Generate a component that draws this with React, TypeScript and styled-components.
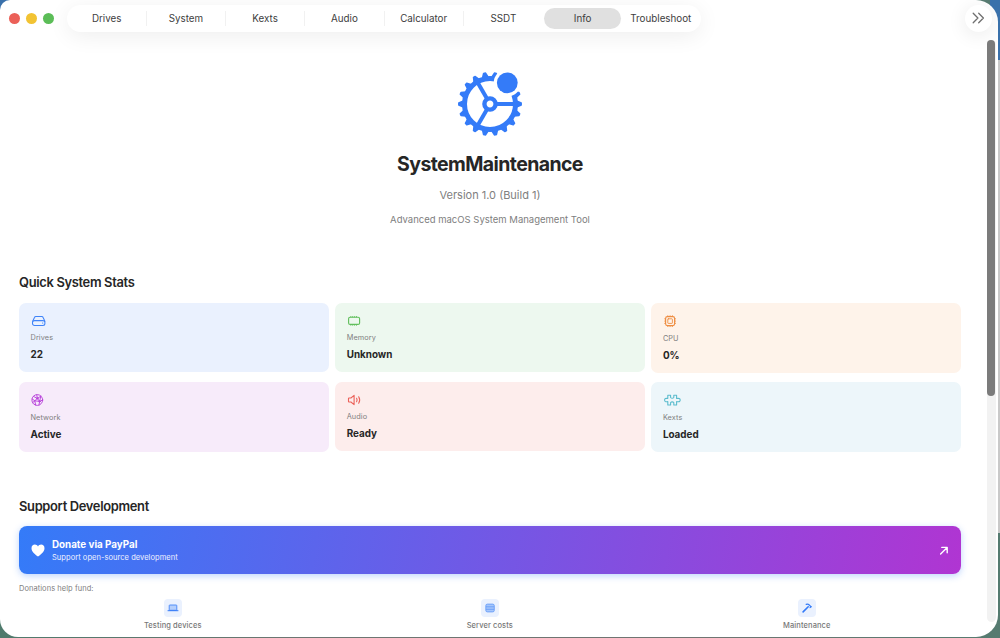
import React from "react";
import styled, { createGlobalStyle } from "styled-components";

const GlobalStyle = createGlobalStyle`
  * { box-sizing: border-box; }
  body { margin: 0; overflow: hidden; font-family: Inter, "Liberation Sans", sans-serif; color: #262626; }
`;

const Desktop = styled.div`
  width: 1000px;
  height: 638px;
  overflow: hidden;
  background:
    linear-gradient(90deg, transparent 990px, #3a71ab 990px) 0 0 / 1000px 60px no-repeat,
    linear-gradient(90deg, transparent 990px, #c9c9c9 990px) 0 60px / 1000px 473px no-repeat,
    linear-gradient(90deg, #3a71ab, #3a71ab) 0 0 / 30px 30px no-repeat,
    linear-gradient(90deg, #4e7a6c, #6d7672 30%, #707572 70%, #557b70);
`;

const Window = styled.div`
  position: relative;
  display: flex;
  flex-direction: column;
  width: 997.5px;
  height: 637px;
  padding-left: 19px;
  background: #fff;
  border-radius: 10px 22px 22px 18px;
  overflow: hidden;
`;

const Toolbar = styled.header`
  display: flex;
  align-items: center;
  flex: none;
  height: 36px;
  margin-left: -19px;
  padding: 0 6px 0 8.5px;
`;

const Lights = styled.div`
  display: flex;
  gap: 6.3px;
  width: 58px;
`;

const Light = styled.i<{ $color: string }>`
  width: 11px;
  height: 11px;
  border-radius: 50%;
  background: ${(p) => p.$color};
`;

const TabBar = styled.nav`
  display: flex;
  align-items: center;
  width: 634.5px;
  height: 27px;
  padding: 0 2px 0 1px;
  border-radius: 14px;
  background: #fff;
  box-shadow: 0 4px 22px rgba(0, 0, 0, 0.07);
`;

const Tab = styled.div<{ $active?: boolean; $divider?: boolean }>`
  display: flex;
  align-items: center;
  justify-content: center;
  flex: none;
  width: ${(p) => (p.$active ? "77px" : "79.25px")};
  height: ${(p) => (p.$active ? "21px" : "15px")};
  margin: ${(p) => (p.$active ? "0 0 0 1.2px" : "0")};
  border-radius: ${(p) => (p.$active ? "11px" : "0")};
  background: ${(p) => (p.$active ? "#e0e0e0" : "transparent")};
  border-right: ${(p) => (p.$divider ? "1px solid #f1f1f1" : "0")};
  font-size: 9.8px;
  color: #3d3d3d;
`;

const MoreButton = styled.div`
  display: grid;
  place-items: center;
  width: 27px;
  height: 27px;
  margin-left: auto;
  border-radius: 50%;
  background: #fff;
  box-shadow: 0 3px 20px rgba(0, 0, 0, 0.09);
`;

const Content = styled.main`
  display: flex;
  flex-direction: column;
  width: 942px;
`;

const Hero = styled.section`
  display: flex;
  flex-direction: column;
  align-items: center;
  height: 236.8px;
  padding-top: 34px;
`;

const AppName = styled.h1`
  margin: 12px 0 0;
  font-size: 19.5px;
  line-height: 28px;
  font-weight: 700;
  letter-spacing: -0.6px;
`;

const Version = styled.div`
  margin-top: 9px;
  font-size: 11px;
  line-height: 16px;
  color: #808080;
`;

const Tagline = styled.div`
  margin-top: 10px;
  font-size: 9.5px;
  line-height: 14px;
  color: #808080;
`;

const SectionTitle = styled.h2`
  margin: 0;
  font-size: 12.9px;
  line-height: 20px;
  font-weight: 600;
  letter-spacing: -0.32px;
`;

const Stats = styled.section`
  display: grid;
  grid-template-columns: repeat(3, 309.6px);
  grid-template-rows: 70px 70px;
  column-gap: 6.6px;
  row-gap: 9.3px;
  align-items: center;
  margin: 9.8px 0 45.2px;
`;

const StatCard = styled.article<{ $tint: string; $height: number }>`
  height: ${(p) => p.$height}px;
  padding: 11px 11.5px;
  border-radius: 7px;
  background: ${(p) => p.$tint};
`;

const StatIcon = styled.div<{ $color: string; $tall: boolean }>`
  display: flex;
  align-items: center;
  height: 14px;
  margin-bottom: ${(p) => (p.$tall ? "5px" : "4.1px")};
  color: ${(p) => p.$color};
`;

const StatLabel = styled.div`
  font-size: 7.3px;
  line-height: 12px;
  letter-spacing: 0.12px;
  color: #808080;
`;

const StatValue = styled.div`
  margin-top: 3px;
  font-size: 9.9px;
  line-height: 14px;
  font-weight: 700;
`;

const Donate = styled.section`
  display: flex;
  align-items: center;
  height: 48.5px;
  margin-top: 8.8px;
  padding: 1px 12px 0;
  border-radius: 8px;
  background: linear-gradient(100deg, #347bf8, #b035d2);
  box-shadow: 0 2px 7px rgba(52, 123, 248, 0.32);
  color: #fff;
`;

const DonateText = styled.div`
  flex: 1;
  margin-left: 7px;
`;

const DonateTitle = styled.div`
  font-size: 9.8px;
  line-height: 14px;
  font-weight: 700;
`;

const DonateSub = styled.div`
  font-size: 7.5px;
  line-height: 12px;
  letter-spacing: 0.05px;
  color: #f1f2ff;
`;

const FundNote = styled.div`
  margin-top: 9.4px;
  font-size: 7.5px;
  line-height: 10px;
  letter-spacing: 0.05px;
  color: #808080;
`;

const Funds = styled.section`
  display: grid;
  grid-template-columns: repeat(3, 1fr);
  width: 951px;
  margin: 5.3px 0 0 -4.7px;
`;

const Fund = styled.div`
  display: flex;
  flex-direction: column;
  align-items: center;
  gap: 3px;
  font-size: 7.5px;
  line-height: 11px;
  font-weight: 500;
  letter-spacing: 0.1px;
  color: #777;
`;

const FundIcon = styled.div`
  display: grid;
  place-items: center;
  width: 18px;
  height: 18px;
  border-radius: 4px;
  background: #eaf1fe;
`;

const ScrollTrack = styled.div`
  position: absolute;
  top: 40px;
  right: 1.5px;
  width: 9px;
  height: 582px;
  border-radius: 5px;
  background: #f2f2f2;
`;

const ScrollThumb = styled.div`
  width: 8px;
  height: 356px;
  border-radius: 4px;
  background: #7b7b7b;
`;

const TEETH = Array.from({ length: 18 }, (_, i) => i * 20);

const GearLogo = () => (
  <svg width="68" height="68" viewBox="-34 -34 68 68">
    <defs>
      <mask id="badge-gap" maskUnits="userSpaceOnUse" x="-34" y="-34" width="68" height="68">
        <rect x="-34" y="-34" width="68" height="68" fill="#fff" />
        <circle cx="17.3" cy="-21.2" r="13.6" fill="#000" />
      </mask>
    </defs>
    <g mask="url(#badge-gap)" fill="#347bf8" stroke="#347bf8">
      {TEETH.map((a) => (
        <path key={a} transform={`rotate(${a})`} d="M26.5 -3 L31.2 -1 V1 L26.5 3 Z" strokeWidth="1.5" strokeLinejoin="round" />
      ))}
      <circle r="25.5" fill="none" strokeWidth="5" />
      <circle r="5.6" fill="none" strokeWidth="4.4" />
      {[0, 120, 240].map((a) => (
        <path key={a} transform={`rotate(${a})`} d="M6.5 0H25" strokeWidth="4" />
      ))}
    </g>
    <circle cx="17.3" cy="-21.2" r="10.4" fill="#347bf8" />
  </svg>
);

const line = { fill: "none", stroke: "currentColor", strokeLinecap: "round", strokeLinejoin: "round" } as const;

const DriveIcon = () => (
  <svg width="15" height="14" viewBox="0 0 15 14" {...line} strokeWidth="1.05">
    <path d="M1.7 7.2 3.6 3.3Q3.9 2.5 4.8 2.5H10.8Q11.7 2.5 12 3.3L13.9 7.2" />
    <rect x="1.5" y="6.6" width="12.4" height="4.9" rx="2" />
    <path d="M11.5 9h.3" />
  </svg>
);

const MemoryIcon = () => (
  <svg width="14" height="14" viewBox="0 0 14 14" {...line} strokeWidth="1.15">
    <rect x="1.6" y="3.2" width="11" height="7.2" rx="1.5" />
    <path d="M3.8 2.5v.5M5.7 2.5v.5M7.6 2.5v.5M9.5 2.5v.5M3.8 10.8v.5M5.7 10.8v.5M7.6 10.8v.5M9.5 10.8v.5" strokeWidth=".9" />
  </svg>
);

const CpuIcon = () => (
  <svg width="14" height="14" viewBox="0 0 14 14" {...line} strokeWidth="1.15">
    <rect x="2.6" y="2.6" width="9" height="9" rx="1.8" />
    <rect x="4.8" y="4.8" width="4.6" height="4.6" rx=".5" strokeWidth=".9" />
    <path d="M4.8 1.7v.6M7.1 1.7v.6M9.4 1.7v.6M4.8 11.9v.6M7.1 11.9v.6M9.4 11.9v.6M1.7 4.8h.6M1.7 7.1h.6M1.7 9.4h.6M11.9 4.8h.6M11.9 7.1h.6M11.9 9.4h.6" strokeWidth=".9" />
  </svg>
);

const NetworkIcon = () => (
  <svg width="14" height="14" viewBox="0 0 14 14" {...line} strokeWidth=".95">
    <circle cx="6.3" cy="7" r="5.4" />
    <path d="M5.8 1.8 6.3 5.4 9.8 3.2M6.3 5.4 3.8 7.8 1.2 6M3.8 7.8 4.6 12M3.8 7.8 8.6 8.4 6.3 5.4M8.6 8.4 11.6 7M8.6 8.4 8 12M2.5 3.4 6.3 5.4M1.8 9.5 3.8 7.8M9.8 3.2 8.6 8.4" />
    <circle cx="6.3" cy="5.4" r=".7" fill="currentColor" />
    <circle cx="8.6" cy="8.4" r=".7" fill="currentColor" />
  </svg>
);

const AudioIcon = () => (
  <svg width="15" height="14" viewBox="0 0 15 14" {...line} strokeWidth="1.1">
    <path d="M1.5 5.5Q1.5 5 2 5H3.9L7.1 2.4V11.6L3.9 9H2Q1.5 9 1.5 8.5Z" />
    <path d="M9.6 5.3Q10.6 7 9.6 8.7M11.7 3.8Q13.7 7 11.7 10.2" />
  </svg>
);

const PuzzleIcon = () => (
  <svg width="18" height="14" viewBox="0 0 18 14" {...line} strokeWidth="1.1">
    <path d="M4.8 2.2H7.6V3.4Q7.2 5.2 9.2 5.2Q11.2 5.2 10.8 3.4V2.2H13.6V5.5Q17.2 4.8 17.2 7.1Q17.2 9.4 13.6 8.6V12H10.8V10.7Q11.2 8.9 9.2 8.9Q7.2 8.9 7.6 10.7V12H4.8V8.6Q1.6 9.4 1.6 7.1Q1.6 4.8 4.8 5.5Z" />
  </svg>
);

const HeartIcon = () => (
  <svg width="14" height="13" viewBox="0 0 14 13" fill="#fff">
    <path d="M7 12.5C5 11 .5 8 .5 4.2.5 2 2 .6 3.9.6 5.2.6 6.3 1.3 7 2.5 7.7 1.3 8.8.6 10.1.6c1.9 0 3.4 1.4 3.4 3.6C13.5 8 9 11 7 12.5Z" />
  </svg>
);

const ArrowIcon = () => (
  <svg width="10" height="10" viewBox="0 0 10 10" fill="none" stroke="#fff" strokeWidth="1.4" strokeLinecap="round" strokeLinejoin="round">
    <path d="M1.6 8 8.2 1.4M2.8 1.4H8.2V6.8" />
  </svg>
);

const ChevronsIcon = () => (
  <svg width="13" height="12" viewBox="0 0 13 12" fill="none" stroke="#707070" strokeWidth="1.3" strokeLinecap="round" strokeLinejoin="round">
    <path d="M1.2 1.2 5.9 6 1.2 10.8M6.7 1.2 11.4 6 6.7 10.8" />
  </svg>
);

const LaptopIcon = () => (
  <svg width="12" height="10" viewBox="0 0 12 10" fill="none" stroke="#347bf8">
    <rect x="2.2" y="2" width="7.6" height="5.3" rx=".6" fill="#b4cffc" strokeWidth=".8" />
    <path d="M1 7.7H11" strokeWidth="1" strokeLinecap="round" />
  </svg>
);

const ServerIcon = () => (
  <svg width="10" height="10" viewBox="0 0 10 10">
    <rect x=".8" y="1.1" width="8.5" height="7.8" rx="1.6" fill="#a6c6fb" stroke="#5e98f9" strokeWidth=".8" />
    <path d="M1 3.8H9M1 6.3H9" stroke="#5e98f9" strokeWidth=".8" />
  </svg>
);

const HammerIcon = () => (
  <svg width="12" height="12" viewBox="0 0 12 12" fill="none" stroke="#347bf8" strokeLinecap="round" strokeLinejoin="round">
    <path d="M2.1 9.9 7.2 4.8" strokeWidth="1.6" />
    <path d="M5.2 2.4Q7 1.8 8.2 2.9L9.8 4.6" strokeWidth="1.3" />
    <path d="M9 5.6 10.2 4.7" strokeWidth="1.1" />
  </svg>
);

const tabs = ["Drives", "System", "Kexts", "Audio", "Calculator", "SSDT", "Info", "Troubleshoot"];

const stats = [
  { label: "Drives", value: "22", color: "#3f83f8", tint: "#eaf1fe", height: 68.6, icon: <DriveIcon /> },
  { label: "Memory", value: "Unknown", color: "#62bf5d", tint: "#edf8ef", height: 68.6, icon: <MemoryIcon /> },
  { label: "CPU", value: "0%", color: "#ee8d42", tint: "#fef3ea", height: 70, icon: <CpuIcon /> },
  { label: "Network", value: "Active", color: "#b845da", tint: "#f7ebfa", height: 70, icon: <NetworkIcon /> },
  { label: "Audio", value: "Ready", color: "#ec6159", tint: "#fdedec", height: 69.2, icon: <AudioIcon /> },
  { label: "Kexts", value: "Loaded", color: "#5bbccd", tint: "#edf6fa", height: 69.6, icon: <PuzzleIcon /> },
];

export default function App() {
  return (
    <Desktop>
      <GlobalStyle />
      <Window>
        <Toolbar>
          <Lights>
            <Light $color="#eb6058" />
            <Light $color="#f2c333" />
            <Light $color="#5bbd57" />
          </Lights>
          <TabBar>
            {tabs.map((t, i) => (
              <Tab key={t} $active={t === "Info"} $divider={i < 5}>{t}</Tab>
            ))}
          </TabBar>
          <MoreButton><ChevronsIcon /></MoreButton>
        </Toolbar>
        <Content>
          <Hero>
            <GearLogo />
            <AppName>SystemMaintenance</AppName>
            <Version>Version 1.0 (Build 1)</Version>
            <Tagline>Advanced macOS System Management Tool</Tagline>
          </Hero>
          <SectionTitle>Quick System Stats</SectionTitle>
          <Stats>
            {stats.map((s) => (
              <StatCard key={s.label} $tint={s.tint} $height={s.height}>
                <StatIcon $color={s.color} $tall={s.height > 69.5}>{s.icon}</StatIcon>
                <StatLabel>{s.label}</StatLabel>
                <StatValue>{s.value}</StatValue>
              </StatCard>
            ))}
          </Stats>
          <SectionTitle>Support Development</SectionTitle>
          <Donate>
            <HeartIcon />
            <DonateText>
              <DonateTitle>Donate via PayPal</DonateTitle>
              <DonateSub>Support open-source development</DonateSub>
            </DonateText>
            <ArrowIcon />
          </Donate>
          <FundNote>Donations help fund:</FundNote>
          <Funds>
            <Fund><FundIcon><LaptopIcon /></FundIcon>Testing devices</Fund>
            <Fund><FundIcon><ServerIcon /></FundIcon>Server costs</Fund>
            <Fund><FundIcon><HammerIcon /></FundIcon>Maintenance</Fund>
          </Funds>
        </Content>
        <ScrollTrack><ScrollThumb /></ScrollTrack>
      </Window>
    </Desktop>
  );
}
